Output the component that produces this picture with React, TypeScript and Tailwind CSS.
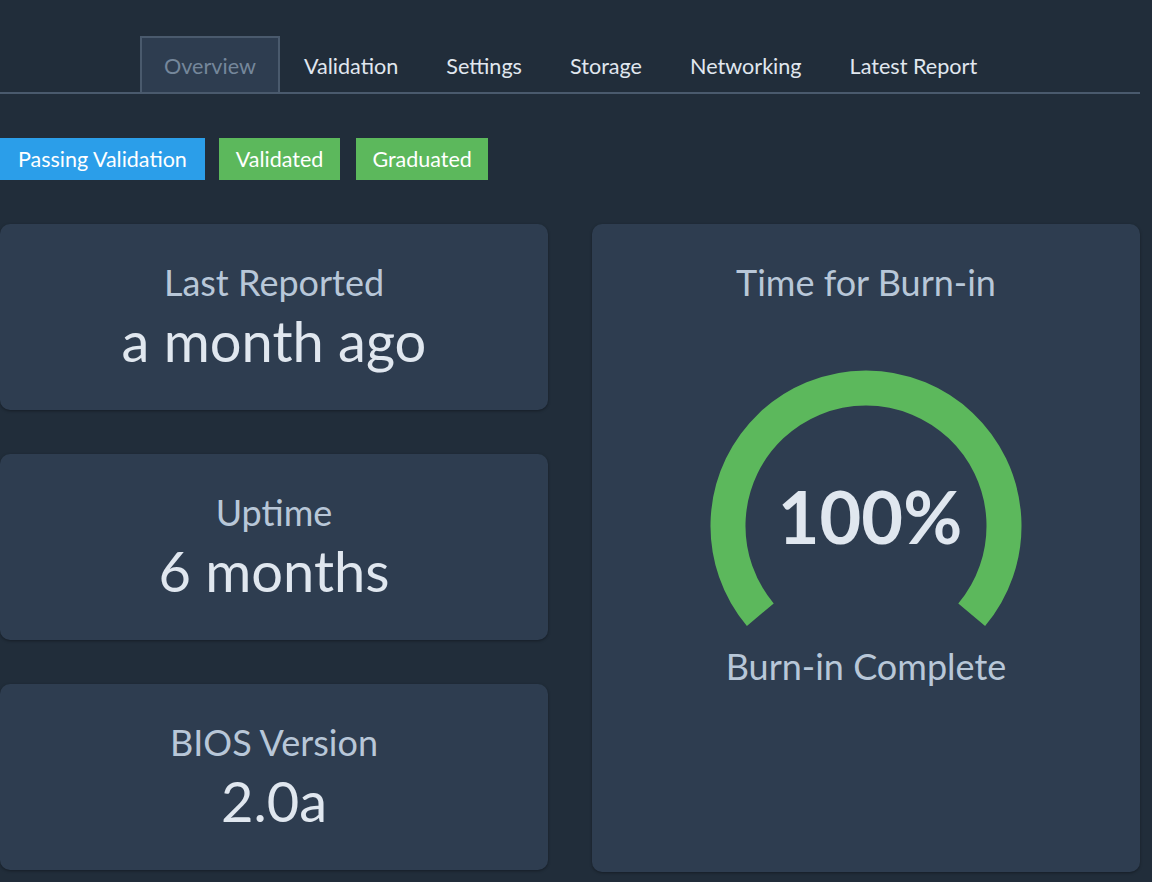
import React from 'react';

const TABS = ['Overview', 'Validation', 'Settings', 'Storage', 'Networking', 'Latest Report'];

const InfoCard: React.FC<{ label: string; value: string }> = ({ label, value }) => (
  <div className="h-[186px] rounded-[10px] bg-[#2e3d50] shadow-[0_1px_3px_rgba(0,0,0,0.35)] flex flex-col items-center justify-center pb-[1px]">
    <div className="text-[36px] leading-[44px] text-[#b8c7d8]">{label}</div>
    <div className="mt-[5px] text-[56px] leading-[64px] text-[#e0e7ef]">{value}</div>
  </div>
);

const Gauge: React.FC<{ percent: number }> = ({ percent }) => (
  <div className="relative w-[320px] h-[320px]">
    <svg width="320" height="320" viewBox="0 0 320 320">
      <path
        d="M 54.3 248.7 A 138 138 0 1 1 265.7 248.7"
        fill="none"
        stroke="#5cb85c"
        strokeWidth="35"
      />
    </svg>
    <div className="absolute inset-0 flex items-center justify-center">
      <span className="text-[72px] font-bold text-[#e0e7ef] leading-none -mt-[20px] ml-[8px]">{percent}%</span>
    </div>
  </div>
);

export default function App() {
  return (
    <div
      className="min-h-[882px] w-full bg-[#212d3a] pr-3 overflow-hidden"
      style={{ fontFamily: 'Lato, "Open Sans", sans-serif' }}
    >
      {/* tabs */}
      <div className="pt-9 pl-[140px] border-b-2 border-[#4a5a6d] flex">
        {TABS.map((t, i) => (
          <div
            key={t}
            className={
              i === 0
                ? 'h-[56px] px-[22px] pt-[2px] flex items-center text-[21.6px] text-[#75879b] bg-[#2e3d50] border-2 border-b-0 border-[#4a5a6d] -mb-[2px]'
                : 'h-[56px] px-6 pt-[4px] flex items-center text-[21.6px] text-[#e0e7ef]'
            }
          >
            {t}
          </div>
        ))}
      </div>

      {/* badges */}
      <div className="mt-[44px] flex gap-[14px] text-[21.5px] text-white">
        <div className="h-[42px] px-[18px] flex items-center bg-[#2b9ee9]">Passing Validation</div>
        <div className="h-[42px] px-[17px] flex items-center bg-[#5cb85c]">Validated</div>
        <div className="h-[42px] px-[16px] flex items-center bg-[#5cb85c] ml-[2px]">Graduated</div>
      </div>

      {/* cards */}
      <div className="mt-[44px] grid grid-cols-[548px_548px] gap-x-[44px]">
        <div className="flex flex-col gap-[44px]">
          <InfoCard label="Last Reported" value="a month ago" />
          <InfoCard label="Uptime" value="6 months" />
          <InfoCard label="BIOS Version" value="2.0a" />
        </div>
        <div className="h-[648px] rounded-[10px] bg-[#2e3d50] shadow-[0_1px_3px_rgba(0,0,0,0.35)] flex flex-col items-center pt-[36px]">
          <div className="text-[36px] leading-[44px] text-[#b8c7d8]">Time for Burn-in</div>
          <div className="mt-[62px]">
            <Gauge percent={100} />
          </div>
          <div className="-mt-[42px] text-[36px] leading-[44px] text-[#b8c7d8]">Burn-in Complete</div>
        </div>
      </div>
    </div>
  );
}
